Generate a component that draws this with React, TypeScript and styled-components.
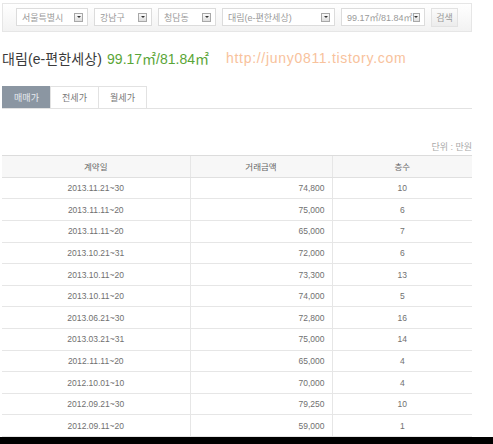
import React from "react";
import styled, { createGlobalStyle } from "styled-components";

const Global = createGlobalStyle`
  html, body { margin: 0; padding: 0; background: #fff; }
  body { font-family: "Liberation Sans", "Noto Sans CJK KR", sans-serif; color: #666; }
`;

const Page = styled.div`
  width: 493px;
  height: 444px;
  display: flex;
  flex-direction: column;
  overflow: hidden;
`;

const Content = styled.div`
  padding: 3px 0 0 2px;
  width: 470px;
  flex: 1;
  display: flex;
  flex-direction: column;
  overflow: hidden;
`;

const Toolbar = styled.div`
  height: 29px;
  box-sizing: border-box;
  border: 1px solid #e6e6e6;
  background: linear-gradient(#ffffff, #f2f2f2);
  display: flex;
  align-items: center;
  gap: 6px;
  padding-left: 13px;
`;

const Select = styled.div<{ $w: number }>`
  width: ${(p) => p.$w}px;
  height: 18px;
  box-sizing: border-box;
  border: 1px solid #dcdcdc;
  background: #fff;
  display: flex;
  align-items: center;
  justify-content: space-between;
  padding: 0 4px 0 5px;
  font-size: 9px;
  color: #9a9a9a;
  white-space: nowrap;
`;

const Arrow = styled.span`
  width: 9px;
  height: 9px;
  box-sizing: border-box;
  border: 1px solid #a8a8a8;
  background: linear-gradient(#fafafa, #dedede);
  display: flex;
  align-items: center;
  justify-content: center;
  &::after {
    content: "";
    border-left: 2px solid transparent;
    border-right: 2px solid transparent;
    border-top: 2px solid #333;
  }
`;

const SearchButton = styled.div`
  width: 27px;
  height: 19px;
  box-sizing: border-box;
  border: 1px solid #e2e2e2;
  background: linear-gradient(#fbfbfb, #ececec);
  display: flex;
  align-items: center;
  justify-content: center;
  font-size: 9px;
  color: #999;
`;

const TitleRow = styled.div`
  margin-top: 16px;
  height: 20px;
  display: flex;
  align-items: center;
  white-space: nowrap;
`;

const Name = styled.span`
  font-size: 14px;
  color: #3a3a3a;
  letter-spacing: 0.1px;
`;

const Area = styled.span`
  font-size: 14px;
  color: #5aa537;
  margin-left: 5px;
`;

const Watermark = styled.span`
  font-size: 14px;
  color: #f8c29c;
  margin-left: 17px;
  letter-spacing: 0.7px;
`;

const Tabs = styled.div`
  margin-top: 18px;
  display: flex;
  border-bottom: 1px solid #e2e2e2;
`;

const Tab = styled.div<{ $active?: boolean }>`
  width: 49px;
  height: 22px;
  box-sizing: border-box;
  display: flex;
  align-items: center;
  justify-content: center;
  font-size: 9px;
  border: 1px solid #e2e2e2;
  border-bottom: none;
  margin-right: -1px;
  background: ${(p) => (p.$active ? "#8b96a2" : "#fff")};
  color: ${(p) => (p.$active ? "#e8ecf0" : "#777")};
  border-color: ${(p) => (p.$active ? "#8b96a2" : "#e2e2e2")};
`;

const Unit = styled.div`
  margin-top: 31px;
  height: 14px;
  text-align: right;
  font-size: 9px;
  color: #aaa;
`;

const Table = styled.table`
  width: 470px;
  margin-top: 1px;
  border-collapse: collapse;
  table-layout: fixed;
  font-size: 8.5px;
  color: #707070;
`;

const Th = styled.th`
  height: 21px;
  background: #f7f7f7;
  border-top: 1px solid #dcdcdc;
  border-bottom: 1px solid #e0e0e0;
  border-left: 1px solid #e6e6e6;
  font-weight: normal;
  color: #666;
  padding: 0;
  &:first-child { border-left: none; }
`;

const Td = styled.td<{ $align?: "center" | "right" }>`
  height: 20.6px;
  padding: 0 ${(p) => (p.$align === "right" ? "7px" : "0")} 0 0;
  text-align: ${(p) => p.$align || "center"};
  border-bottom: 1px solid #e6e6e6;
  border-left: 1px solid #e6e6e6;
  &:first-child { border-left: none; }
`;

const Footer = styled.div`
  height: 7px;
  flex-shrink: 0;
  background: #000;
`;

const rows: [string, string, string][] = [
  ["2013.11.21~30", "74,800", "10"],
  ["2013.11.11~20", "75,000", "6"],
  ["2013.11.11~20", "65,000", "7"],
  ["2013.10.21~31", "72,000", "6"],
  ["2013.10.11~20", "73,300", "13"],
  ["2013.10.11~20", "74,000", "5"],
  ["2013.06.21~30", "72,800", "16"],
  ["2013.03.21~31", "75,000", "14"],
  ["2012.11.11~20", "65,000", "4"],
  ["2012.10.01~10", "70,000", "4"],
  ["2012.09.21~30", "79,250", "10"],
  ["2012.09.11~20", "59,000", "1"],
];

const selects: [string, number][] = [
  ["서울특별시", 72],
  ["강남구", 58],
  ["청담동", 58],
  ["대림(e-편한세상)", 113],
  ["99.17㎡/81.84㎡", 84],
];

export default function App() {
  return (
    <>
      <Global />
      <Page>
        <Content>
          <Toolbar>
            {selects.map(([label, w]) => (
              <Select key={label} $w={w}>
                <span>{label}</span>
                <Arrow />
              </Select>
            ))}
            <SearchButton>검색</SearchButton>
          </Toolbar>
          <TitleRow>
            <Name>대림(e-편한세상)</Name>
            <Area>99.17㎡/81.84㎡</Area>
            <Watermark>http://juny0811.tistory.com</Watermark>
          </TitleRow>
          <Tabs>
            <Tab $active>매매가</Tab>
            <Tab>전세가</Tab>
            <Tab>월세가</Tab>
          </Tabs>
          <Unit>단위 : 만원</Unit>
          <Table>
            <colgroup>
              <col style={{ width: 188 }} />
              <col style={{ width: 142 }} />
              <col style={{ width: 140 }} />
            </colgroup>
            <thead>
              <tr>
                <Th>계약일</Th>
                <Th>거래금액</Th>
                <Th>층수</Th>
              </tr>
            </thead>
            <tbody>
              {rows.map(([d, p, f], i) => (
                <tr key={i}>
                  <Td>{d}</Td>
                  <Td $align="right">{p}</Td>
                  <Td>{f}</Td>
                </tr>
              ))}
            </tbody>
          </Table>
        </Content>
        <Footer />
      </Page>
    </>
  );
}
